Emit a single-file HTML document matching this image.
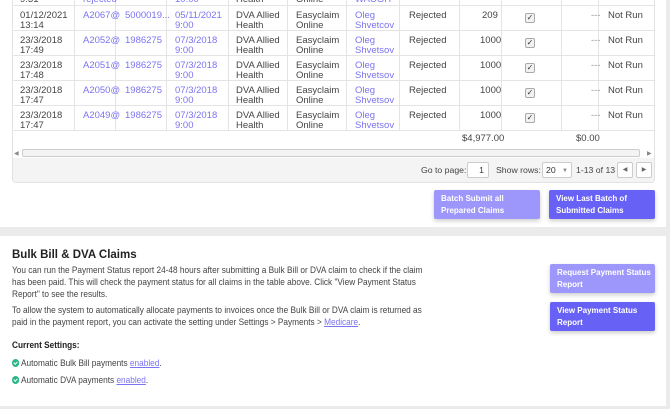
<!DOCTYPE html>
<html><head><meta charset="utf-8"><style>
*{margin:0;padding:0;box-sizing:border-box}
body{width:670px;height:409px;overflow:hidden;background:#ebebeb;font-family:"Liberation Sans",sans-serif;font-size:9.5px;color:#444;position:relative}
.a{position:absolute}
.card1{left:0;top:0;width:666px;height:227px;background:#fff}
.card2{left:0;top:236px;width:666px;height:170px;background:#fff}
.tbl{left:12px;top:-10px;width:643px;height:193px;border:1px solid #e2e2e2;border-radius:0 0 4px 4px;overflow:hidden}
.vl{position:absolute;top:0;width:1px;height:131px;background:#e4e4e4}
.hl{position:absolute;left:0;width:642px;height:1px;background:#e4e4e4}
.c{position:absolute;line-height:10px;white-space:nowrap}
.lk{color:#7b73f0}
.cb{position:absolute;width:10px;height:10px;border:1px solid #aaa;border-radius:2px;background:#f2f2f2;font-size:8px;line-height:8px;text-align:center;color:#333}
.btn{position:absolute;color:#fff;font-weight:bold;font-size:8px;line-height:12px;padding:3px 7px;border-radius:2px;box-shadow:0 2px 4px rgba(0,0,0,.2);white-space:nowrap}
p{position:absolute;left:12px;line-height:12px;font-size:9.2px;white-space:nowrap;transform:scaleX(0.9);transform-origin:0 0}
u{color:#7b73f0}
.chk{display:inline-block;width:8px;height:8px;border-radius:50%;background:#2bb58a;vertical-align:-1px;margin-right:2px;position:relative}
.chk:after{content:"";position:absolute;left:2px;top:1.5px;width:3px;height:2px;border-left:1.3px solid #fff;border-bottom:1.3px solid #fff;transform:rotate(-45deg)}
.pg{font-size:8.7px}
</style></head><body>
<div class="a card1"></div>
<div class="a card2"></div>
<div class="a tbl">
<div style="position:absolute;left:0;top:167px;width:643px;height:26px;background:#f4f4f4"></div>
</div>
<div class="a" style="left:12px;top:0;width:643px;height:150px">
<div class="vl" style="left:62px"></div><div class="vl" style="left:103px"></div><div class="vl" style="left:154px"></div><div class="vl" style="left:216px"></div><div class="vl" style="left:275px"></div><div class="vl" style="left:334px"></div><div class="vl" style="left:387px"></div><div class="vl" style="left:447px"></div><div class="vl" style="left:489px"></div><div class="vl" style="left:549px"></div><div class="vl" style="left:586px"></div>
<div class="hl" style="top:5px"></div><div class="hl" style="top:30px"></div><div class="hl" style="top:55px"></div><div class="hl" style="top:80px"></div><div class="hl" style="top:105px"></div><div class="hl" style="top:130px"></div>
</div>
<div class="a" style="left:0;top:0;width:670px;height:150px">
<div class="c" style="left:20px;top:-5px">9:31</div><div class="c lk" style="left:83px;top:-5px">rejected</div><div class="c lk" style="left:175px;top:-5px">10:00</div><div class="c" style="left:236px;top:-5px">Health</div><div class="c" style="left:296px;top:-5px">Online</div><div class="c lk" style="left:355px;top:-5px">WAUGH</div>
</div>
<div class="c" style="left:462px;top:134px">$4,977.00</div>
<div class="c" style="left:576px;top:134px">$0.00</div>
<div class="a" style="left:22px;top:149px;width:618px;height:8px;border:1px solid #ccc;background:#f4f4f4;border-radius:2px"></div>
<div class="c" style="left:14px;top:149px;font-size:6px;color:#888">◀</div>
<div class="c" style="left:647px;top:149px;font-size:6px;color:#888">▶</div>
<div class="c pg" style="left:421px;top:165px">Go to page:</div>
<div class="a pg" style="left:467px;top:162px;width:22px;height:16px;border:1px solid #ccc;background:#fff;border-radius:2px;text-align:right;padding:3px 4px;line-height:9px;color:#333">1</div>
<div class="c pg" style="left:496px;top:165px">Show rows:</div>
<div class="a pg" style="left:542px;top:162px;width:30px;height:16px;border:1px solid #ccc;background:#fff;border-radius:2px;padding:3px;line-height:9px;color:#333">20</div>
<div class="c" style="left:562px;top:166px;font-size:6px;color:#888">▼</div>
<div class="c pg" style="left:576px;top:165px">1-13 of 13</div>
<div class="a" style="left:617px;top:162px;width:16px;height:16px;border:1px solid #ccc;background:#fff;border-radius:2px;font-size:6px;text-align:center;line-height:14px;color:#666">◀</div>
<div class="a" style="left:636px;top:162px;width:16px;height:16px;border:1px solid #ccc;background:#fff;border-radius:2px;font-size:6px;text-align:center;line-height:14px;color:#666">▶</div>
<div class="btn" style="left:434px;top:190px;width:106px;height:29px;background:#9d97fb">Batch Submit all<br>Prepared Claims</div>
<div class="btn" style="left:549px;top:190px;width:106px;height:29px;background:#6761f5">View Last Batch of<br>Submitted Claims</div>
<div class="c" style="left:12px;top:249px;font-size:11.5px;font-weight:bold;color:#222;line-height:12px">Bulk Bill &amp; DVA Claims</div>
<p style="top:264px">You can run the Payment Status report 24-48 hours after submitting a Bulk Bill or DVA claim to check if the claim<br>has been paid. This will check the payment status for all claims in the table above. Click "View Payment Status<br>Report" to see the results.</p>
<p style="top:304px">To allow the system to automatically allocate payments to invoices once the Bulk Bill or DVA claim is returned as<br>paid in the payment report, you can activate the setting under Settings &gt; Payments &gt; <u>Medicare</u>.</p>
<p style="top:339px;font-weight:bold;color:#222">Current Settings:</p>
<p style="top:357px"><span class="chk"></span>Automatic Bulk Bill payments <u>enabled</u>.</p>
<p style="top:374px"><span class="chk"></span>Automatic DVA payments <u>enabled</u>.</p>
<div class="btn" style="left:550px;top:264px;width:105px;height:29px;background:#9d97fb">Request Payment Status<br>Report</div>
<div class="btn" style="left:550px;top:302px;width:105px;height:29px;background:#6761f5">View Payment Status<br>Report</div>
<div class="a" style="left:0;top:0">
<div class="c" style="left:20px;top:11px">01/12/2021<br>13:14</div><div class="c lk" style="left:83px;top:11px">A2067@</div><div class="c lk" style="left:125px;top:11px">5000019...</div><div class="c lk" style="left:175px;top:11px">05/11/2021<br>9:00</div><div class="c" style="left:236px;top:11px">DVA Allied<br>Health</div><div class="c" style="left:296px;top:11px">Easyclaim<br>Online</div><div class="c lk" style="left:355px;top:11px">Oleg<br>Shvetcov</div><div class="c" style="left:409px;top:11px">Rejected</div><div class="c" style="left:482px;top:11px">209</div><div class="cb" style="left:525px;top:13px">✓</div><div class="c" style="left:591px;top:11px;color:#999">---</div><div class="c" style="left:608px;top:11px">Not Run</div>
<div class="c" style="left:20px;top:36px">23/3/2018<br>17:49</div><div class="c lk" style="left:83px;top:36px">A2052@</div><div class="c lk" style="left:125px;top:36px">1986275</div><div class="c lk" style="left:175px;top:36px">07/3/2018<br>9:00</div><div class="c" style="left:236px;top:36px">DVA Allied<br>Health</div><div class="c" style="left:296px;top:36px">Easyclaim<br>Online</div><div class="c lk" style="left:355px;top:36px">Oleg<br>Shvetsov</div><div class="c" style="left:409px;top:36px">Rejected</div><div class="c" style="left:480px;top:36px">1000</div><div class="cb" style="left:525px;top:38px">✓</div><div class="c" style="left:591px;top:36px;color:#999">---</div><div class="c" style="left:608px;top:36px">Not Run</div>
<div class="c" style="left:20px;top:61px">23/3/2018<br>17:48</div><div class="c lk" style="left:83px;top:61px">A2051@</div><div class="c lk" style="left:125px;top:61px">1986275</div><div class="c lk" style="left:175px;top:61px">07/3/2018<br>9:00</div><div class="c" style="left:236px;top:61px">DVA Allied<br>Health</div><div class="c" style="left:296px;top:61px">Easyclaim<br>Online</div><div class="c lk" style="left:355px;top:61px">Oleg<br>Shvetsov</div><div class="c" style="left:409px;top:61px">Rejected</div><div class="c" style="left:480px;top:61px">1000</div><div class="cb" style="left:525px;top:63px">✓</div><div class="c" style="left:591px;top:61px;color:#999">---</div><div class="c" style="left:608px;top:61px">Not Run</div>
<div class="c" style="left:20px;top:86px">23/3/2018<br>17:47</div><div class="c lk" style="left:83px;top:86px">A2050@</div><div class="c lk" style="left:125px;top:86px">1986275</div><div class="c lk" style="left:175px;top:86px">07/3/2018<br>9:00</div><div class="c" style="left:236px;top:86px">DVA Allied<br>Health</div><div class="c" style="left:296px;top:86px">Easyclaim<br>Online</div><div class="c lk" style="left:355px;top:86px">Oleg<br>Shvetsov</div><div class="c" style="left:409px;top:86px">Rejected</div><div class="c" style="left:480px;top:86px">1000</div><div class="cb" style="left:525px;top:88px">✓</div><div class="c" style="left:591px;top:86px;color:#999">---</div><div class="c" style="left:608px;top:86px">Not Run</div>
<div class="c" style="left:20px;top:111px">23/3/2018<br>17:47</div><div class="c lk" style="left:83px;top:111px">A2049@</div><div class="c lk" style="left:125px;top:111px">1986275</div><div class="c lk" style="left:175px;top:111px">07/3/2018<br>9:00</div><div class="c" style="left:236px;top:111px">DVA Allied<br>Health</div><div class="c" style="left:296px;top:111px">Easyclaim<br>Online</div><div class="c lk" style="left:355px;top:111px">Oleg<br>Shvetsov</div><div class="c" style="left:409px;top:111px">Rejected</div><div class="c" style="left:480px;top:111px">1000</div><div class="cb" style="left:525px;top:113px">✓</div><div class="c" style="left:591px;top:111px;color:#999">---</div><div class="c" style="left:608px;top:111px">Not Run</div>
</div>
</body></html>
